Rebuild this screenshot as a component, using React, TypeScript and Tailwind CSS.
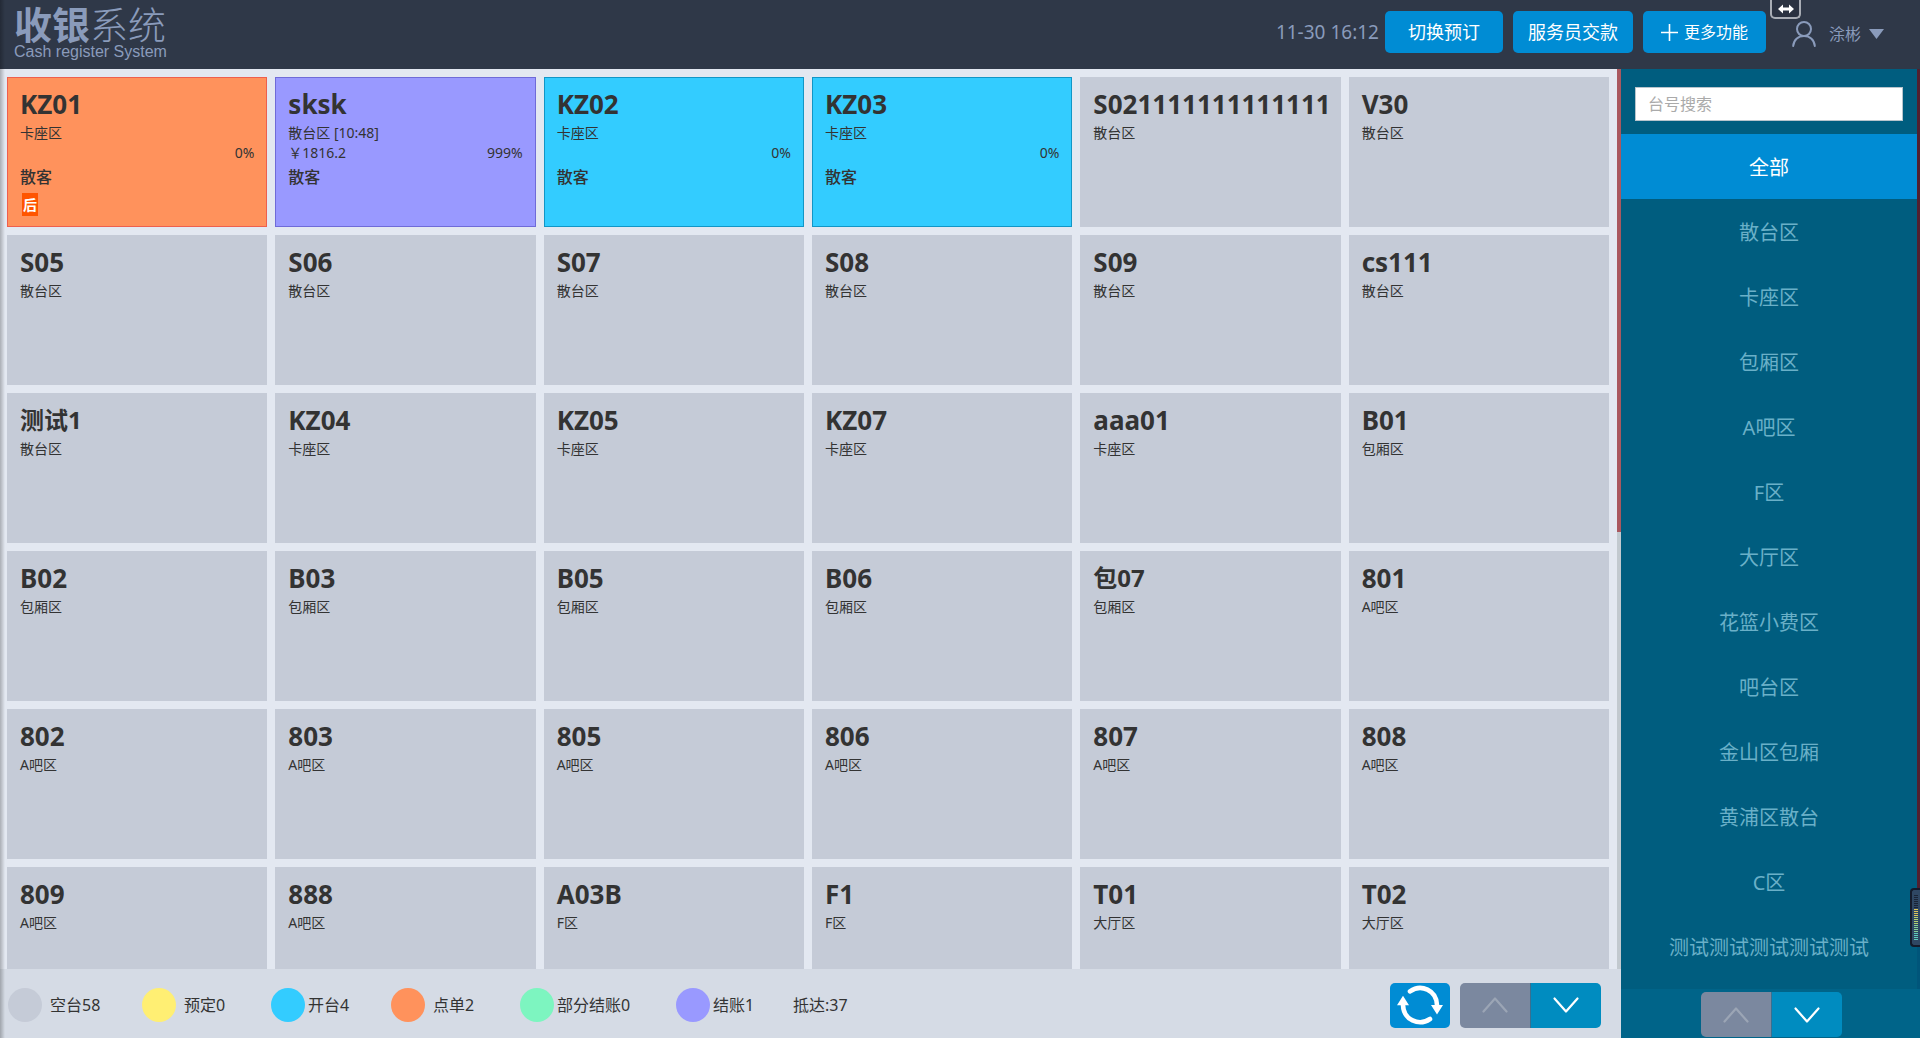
import React from 'react';

type Status = 'free' | 'open' | 'ordered' | 'settled';
type Desk = { name: string; area: string; status?: Status; time?: string; amount?: string; percent?: string; guest?: string; tag?: string };

const tones: Record<Status, string> = {
  free: 'bg-[#c5cbd7] border-transparent',
  open: 'bg-[#33ccff] border-[#1296c6]',
  ordered: 'bg-[#ff925c] border-[#ee5f4e]',
  settled: 'bg-[#9999ff] border-[#6f6bd8]',
};

const desks: Desk[] = [
  { name: 'KZ01', area: '卡座区', status: 'ordered', percent: '0%', guest: '散客', tag: '后' },
  { name: 'sksk', area: '散台区', status: 'settled', time: '[10:48]', amount: '￥1816.2', percent: '999%', guest: '散客' },
  { name: 'KZ02', area: '卡座区', status: 'open', percent: '0%', guest: '散客' },
  { name: 'KZ03', area: '卡座区', status: 'open', percent: '0%', guest: '散客' },
  { name: 'S021111111111111', area: '散台区' },
  { name: 'V30', area: '散台区' },
  { name: 'S05', area: '散台区' },
  { name: 'S06', area: '散台区' },
  { name: 'S07', area: '散台区' },
  { name: 'S08', area: '散台区' },
  { name: 'S09', area: '散台区' },
  { name: 'cs111', area: '散台区' },
  { name: '测试1', area: '散台区' },
  { name: 'KZ04', area: '卡座区' },
  { name: 'KZ05', area: '卡座区' },
  { name: 'KZ07', area: '卡座区' },
  { name: 'aaa01', area: '卡座区' },
  { name: 'B01', area: '包厢区' },
  { name: 'B02', area: '包厢区' },
  { name: 'B03', area: '包厢区' },
  { name: 'B05', area: '包厢区' },
  { name: 'B06', area: '包厢区' },
  { name: '包07', area: '包厢区' },
  { name: '801', area: 'A吧区' },
  { name: '802', area: 'A吧区' },
  { name: '803', area: 'A吧区' },
  { name: '805', area: 'A吧区' },
  { name: '806', area: 'A吧区' },
  { name: '807', area: 'A吧区' },
  { name: '808', area: 'A吧区' },
  { name: '809', area: 'A吧区' },
  { name: '888', area: 'A吧区' },
  { name: 'A03B', area: 'F区' },
  { name: 'F1', area: 'F区' },
  { name: 'T01', area: '大厅区' },
  { name: 'T02', area: '大厅区' },
];

const areas = ['全部', '散台区', '卡座区', '包厢区', 'A吧区', 'F区', '大厅区', '花篮小费区', '吧台区', '金山区包厢', '黄浦区散台', 'C区', '测试测试测试测试测试'];

const legend = [
  { label: '空台58', dot: 'bg-[#c5cbd7]', item: 'w-[134px] gap-2' },
  { label: '预定0', dot: 'bg-[#ffef73]', item: 'w-[129px] gap-2' },
  { label: '开台4', dot: 'bg-[#33ccff]', item: 'w-[120px] gap-[3px]' },
  { label: '点单2', dot: 'bg-[#ff925c]', item: 'w-[129px] gap-2' },
  { label: '部分结账0', dot: 'bg-[#7df5c0]', item: 'w-[156px] gap-[3px]' },
  { label: '结账1', dot: 'bg-[#9999ff]', item: 'w-[117px] gap-[3px]' },
];

const levels = [
  ...Array(7).fill('bg-[#1a2436]'),
  ...Array(4).fill('bg-[#dcc65a]'),
  ...Array(4).fill('bg-[#b5d070]'),
  ...Array(4).fill('bg-[#86cf96]'),
  ...Array(4).fill('bg-[#5fccbb]'),
];

function DeskCard({ desk }: { desk: Desk }) {
  const wide = /[^\x00-\x7f]/.test(desk.name);
  return (
    <button className={`flex h-[150px] min-w-0 flex-col border px-3 pt-2 text-left text-[#333] ${tones[desk.status ?? 'free']}`}>
      <span className={`leading-9 font-bold whitespace-nowrap ${wide ? 'text-2xl' : 'text-[26px]'}`}>{desk.name}</span>
      <span className="mt-px text-sm leading-5">
        {desk.area} {desk.time}
      </span>
      {desk.guest && (
        <>
          <span className="flex w-full justify-between text-sm leading-5">
            <span>{desk.amount}</span>
            <span>{desk.percent}</span>
          </span>
          <span className="text-base leading-7 font-medium">{desk.guest}</span>
        </>
      )}
      {desk.tag && <span className="mt-0.5 ml-0.5 flex h-[23px] w-4 items-center justify-center bg-[#ff5500] text-sm font-bold text-white">{desk.tag}</span>}
    </button>
  );
}

function Chevron({ up }: { up?: boolean }) {
  return (
    <svg width="26" height="16" viewBox="0 0 26 16" fill="none" stroke="currentColor" strokeWidth="2.2" strokeLinecap="round" strokeLinejoin="round">
      <path d={up ? 'M1.5 14.5 13 1.5l11.5 13' : 'M1.5 1.5 13 14.5l11.5-13'} />
    </svg>
  );
}

function Pager({ label }: { label: string }) {
  return (
    <div className="flex h-[45px] w-[141px] overflow-hidden rounded-[5px]">
      <button aria-label={`${label}上一页`} className="flex flex-1 items-center justify-center border-r border-[#3a6f90] bg-[#7b889f] text-[#9ba5b5]">
        <Chevron up />
      </button>
      <button aria-label={`${label}下一页`} className="flex flex-1 items-center justify-center bg-[#008cc0] text-white">
        <Chevron />
      </button>
    </div>
  );
}

const headerButton = 'flex h-[42px] items-center justify-center rounded-[5px] bg-[#008cd4] text-white';

export default function App() {
  return (
    <div className="relative flex h-screen flex-col overflow-hidden bg-[#e3e8f1] font-['Noto_Sans','Noto_Sans_CJK_SC',sans-serif]">
      <header className="flex h-[69px] shrink-0 items-start bg-[#2f3848] text-[#8a9bbb]">
        <h1 className="pt-1 pl-[14px] leading-none">
          <span className="block text-[38px] leading-10 font-light"><b className="font-bold">收银</b>系统</span>
          <span className="block font-['Liberation_Sans',sans-serif] text-base leading-4">Cash register System</span>
        </h1>
        <div className="ml-auto flex pt-[11px] pr-9">
          <time className="mr-[6px] text-[19px] leading-[42px]">11-30 16:12</time>
          <button className={`${headerButton} w-[118px] text-lg`}>切换预订</button>
          <button className={`${headerButton} ml-[10px] w-[120px] text-lg`}>服务员交款</button>
          <button className={`${headerButton} ml-[10px] w-[123px] gap-[6px] text-base`}>
            <svg width="17" height="17" viewBox="0 0 17 17" stroke="currentColor" strokeWidth="1.6"><path d="M8.5 0v17M0 8.5h17" /></svg>
            更多功能
          </button>
          <button className="ml-[26px] flex h-[46px] items-center text-base">
            <svg width="24" height="26" viewBox="0 0 24 26" fill="none" stroke="currentColor" strokeWidth="2" strokeLinecap="round">
              <circle cx="12" cy="8" r="7" />
              <path d="M1.200 25C1.700 19 6 15 12 15s10.300 4 10.800 10" />
            </svg>
            <span className="ml-[13px]">涂彬</span>
            <svg className="ml-2" width="15" height="10" viewBox="0 0 15 10" fill="currentColor"><path d="M0 0h15L7.500 10z" /></svg>
          </button>
        </div>
      </header>

      <div className="flex min-h-0 flex-1">
        <main className="flex min-w-0 flex-1 flex-col">
          <div className="flex min-h-0 flex-1">
            <div className="min-w-0 flex-1 overflow-hidden pt-2 pr-2 pl-[7px]">
              <div className="grid grid-cols-6 gap-2">
                {desks.map((d) => <DeskCard key={d.name} desk={d} />)}
              </div>
            </div>
            <div className="w-1 shrink-0 bg-[#c2c9cf]"><div className="h-[463px] bg-[#a9585f]" /></div>
          </div>
          <footer className="flex h-[69px] shrink-0 items-center bg-[#d5dbe5] pt-[3px] pr-5 pl-2 text-base text-[#333]">
            {legend.map((l) => (
              <span key={l.label} className={`flex shrink-0 items-center ${l.item}`}>
                <i className={`size-[34px] rounded-full ${l.dot}`} />
                {l.label}
              </span>
            ))}
            <span>抵达:37</span>
            <button aria-label="刷新" className="mr-[10px] ml-auto flex h-[45px] w-[60px] items-center justify-center rounded-[5px] bg-[#008cd4] text-white">
              <svg width="46" height="40" viewBox="0 0 46 40" fill="none" stroke="currentColor" strokeWidth="4.6" strokeLinecap="round">
                <path d="M13 6.300C24 -1.500 39.500 5 40 20" />
                <path d="M33 34C22 41.500 6.500 35 6 20" />
                <path d="M34 20h12l-6 9.500zM0 20.300h12l-6-9.500z" fill="currentColor" stroke="none" />
              </svg>
            </button>
            <Pager label="台位" />
          </footer>
        </main>

        <aside className="flex w-[299px] shrink-0 flex-col bg-[#005d7f]">
          <div className="flex min-h-0 flex-1">
            <div className="flex min-w-0 flex-1 flex-col overflow-hidden">
              <div className="shrink-0 px-[14px] pt-[18px] pb-[13px]">
                <input aria-label="台号搜索" placeholder="台号搜索" className="h-[34px] w-full border border-[#b8c4cc] bg-white px-3 text-base placeholder:text-[#aaa]" />
              </div>
              <nav className="flex flex-col">
                {areas.map((a, i) => (
                  <button key={a} className={`h-[65px] shrink-0 pt-0.5 text-xl ${i === 0 ? 'bg-[#008cd4] text-white' : 'text-[#6ab0c8]'}`}>{a}</button>
                ))}
              </nav>
            </div>
            <div className="flex w-[3px] shrink-0 flex-col bg-[#00557a]"><div className="h-[820px] bg-[#51202f]" /></div>
          </div>
          <div className="flex h-[49px] shrink-0 justify-center bg-[#006489] pt-[3px] pl-0.5"><Pager label="区域" /></div>
        </aside>
      </div>

      <div className="pointer-events-none absolute inset-y-0 left-0 w-[5px] bg-linear-to-r from-black/25 to-transparent" />

      <button aria-label="拖动" className="absolute top-0 right-[119px] flex h-[19px] w-[31px] items-center justify-center rounded-b-[5px] border-2 border-t-0 border-double border-[#a9adb5] bg-[#2b3241] text-white">
        <svg width="16" height="10" viewBox="0 0 16 10" fill="currentColor"><path d="M0 5 5 .500v3h6v-3L16 5l-5 4.500v-3H5v3z" /></svg>
      </button>

      <div className="absolute right-0 bottom-[91px] flex h-[59px] w-[10px] flex-col justify-center gap-px rounded-l-[4px] border-2 border-r-0 border-[#141b2b] bg-[#2f4763] pl-0.5">
        {levels.map((tone, i) => <i key={i} className={`h-px w-1 ${tone}`} />)}
      </div>
    </div>
  );
}
